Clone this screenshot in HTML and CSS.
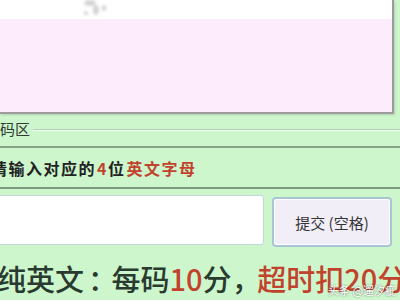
FILE: index.html
```html
<!DOCTYPE html>
<html lang="zh-CN">
<head>
    <meta charset="UTF-8">
    <meta name="viewport" content="width=device-width, initial-scale=1.0">
    <title>打字测试</title>
    <link rel="stylesheet" href="styles.css">
</head>
<body>
    <div class="page">
        <div class="captcha">
            <div class="captcha-img">
                <svg class="smudge" width="40" height="19" viewBox="0 0 40 19">
                    <g fill="#b5b5b5" opacity="0.6">
                        <ellipse cx="14" cy="3" rx="6" ry="3"/>
                        <ellipse cx="20" cy="10" rx="3" ry="5"/>
                        <ellipse cx="28" cy="8" rx="2" ry="3"/>
                        <ellipse cx="10" cy="13" rx="2" ry="2"/>
                    </g>
                </svg>
            </div>
            <div class="captcha-pad"></div>
        </div>

        <div class="legend-row">
            <span class="legend">码区</span>
            <span class="legend-line"></span>
        </div>

        <div class="prompt">
            <span class="prompt-text">请输入对应的<em class="red">4</em>位<em class="red">英文字母</em></span>
        </div>

        <div class="input-row">
            <input type="text" class="code-input">
            <button class="submit">提交 (空格)</button>
        </div>

        <div class="rules">纯英文<span class="colon">：</span>每码<span class="red">10</span>分<span class="comma">，</span><span class="red">超时扣20分</span><span class="comma">，</span></div>

        <div class="watermark">头条 @遛汐疵</div>
    </div>
</body>
</html>
```

FILE: styles.css
```css
body {
    margin: 0;
    background-color: #cdf6cc;
    font-family: "Noto Sans CJK SC", "Liberation Sans", sans-serif;
    overflow: hidden;
}

.page {
    position: relative;
    width: 400px;
    height: 300px;
    overflow: hidden;
}

.captcha {
    width: 392px;
    border-right: 2px solid #9c9c9c;
    border-bottom: 2px solid #9c9c9c;
    box-shadow: 1px 1px 2px rgba(0, 0, 0, 0.15);
}

.captcha-img {
    height: 19px;
    background: #fff;
    padding-left: 76px;
}

.smudge {
    display: block;
    filter: blur(1.5px);
}

.captcha-pad {
    height: 93px;
    background: #fdecfb;
}

.legend-row {
    display: flex;
    align-items: center;
    height: 20px;
    margin-top: 5px;
}

.legend {
    font-size: 15px;
    line-height: 20px;
    color: #2f3a33;
    padding-right: 3px;
}

.legend-line {
    flex: 1;
    border-top: 1px solid #b7cdb7;
    border-bottom: 1px solid #effdef;
    margin-top: 1px;
}

.prompt {
    margin-top: 7px;
    height: 39px;
    border-top: 2px solid #86a487;
    border-bottom: 2px solid #7c9a7d;
    display: flex;
    align-items: center;
}

.prompt-text {
    margin-left: -9px;
    font-size: 16px;
    font-weight: 700;
    letter-spacing: 1.5px;
    color: #222;
    white-space: nowrap;
}

.prompt-text .red {
    margin-left: 1px;
}

.red {
    color: #c2432d;
    font-style: normal;
}

.input-row {
    display: flex;
    gap: 8px;
    padding-top: 6px;
}

.code-input {
    margin-left: -10px;
    width: 274px;
    height: 50px;
    box-sizing: border-box;
    border: 1px solid #c2d6dc;
    border-radius: 3px;
    background: #fff;
    outline: none;
}

.submit {
    margin-top: 2px;
    width: 120px;
    height: 50px;
    border: 2px solid #a7c5d5;
    border-radius: 4px;
    background: #f1eef8;
    box-shadow: inset 0 0 0 1px #fff;
    font-family: "Noto Sans CJK SC", sans-serif;
    font-size: 15px;
    color: #333;
    cursor: pointer;
}

.rules {
    margin: 13px 0 0 -3px;
    font-size: 29px;
    font-weight: 500;
    line-height: 36px;
    color: #293a2f;
    white-space: nowrap;
}

.colon,
.comma {
    font-feature-settings: "halt";
}

.colon {
    padding: 0 9px 0 4px;
}

.comma {
    padding-right: 11px;
}

.watermark {
    position: absolute;
    left: 328px;
    top: 282px;
    font-size: 11px;
    color: #fff;
    text-shadow: 0 0 2px rgba(0, 0, 0, 0.6);
    white-space: nowrap;
}
```
